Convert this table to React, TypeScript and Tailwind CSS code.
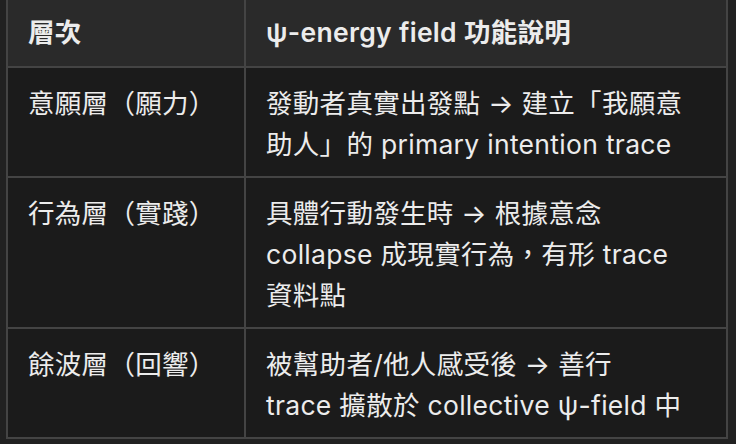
import React from 'react';

const rows = [
    {
        layer: '意願層（願力）',
        lines: ['發動者真實出發點 → 建立「我願意', '助人」的 primary intention trace'],
    },
    {
        layer: '行為層（實踐）',
        lines: ['具體行動發生時 → 根據意念', 'collapse 成現實行為，有形 trace', '資料點'],
    },
    {
        layer: '餘波層（回響）',
        lines: ['被幫助者/他人感受後 → 善行', 'trace 擴散於 collective ψ-field 中'],
    },
];

const App = () => {
    return (
        <div
            className="w-[736px] h-[444px] overflow-hidden bg-[#212121] text-[#ececec] text-[26.5px] leading-[41px] tracking-[0.3px] [text-spacing-trim:space-all]"
            style={{ fontFamily: "Inter, 'Noto Sans CJK TC', sans-serif" }}
        >
            <div className="ml-[6px] w-[722px] border-x-2 border-b-2 border-[#444444]">
                {/* header */}
                <div className="grid grid-cols-[238px_1fr] bg-[#2a2a2a] font-semibold">
                    <div className="pl-5 pt-[12px] pb-[13px] border-r-2 border-[#444444]">層次</div>
                    <div className="pl-5 pt-[12px] pb-[13px]">ψ-energy field 功能說明</div>
                </div>
                {rows.map((row, index) => (
                    <div
                        key={index}
                        className="grid grid-cols-[238px_1fr] bg-[#1b1b1b] border-t-2 border-[#444444]"
                    >
                        <div className="pl-5 pt-[15px] pb-[11px] border-r-2 border-[#444444]">{row.layer}</div>
                        <div className="pl-5 pr-4 pt-[15px] pb-[11px] whitespace-nowrap">
                            {row.lines.map((line, i) => (
                                <div key={i}>{line}</div>
                            ))}
                        </div>
                    </div>
                ))}
            </div>
        </div>
    );
};

export default App;
